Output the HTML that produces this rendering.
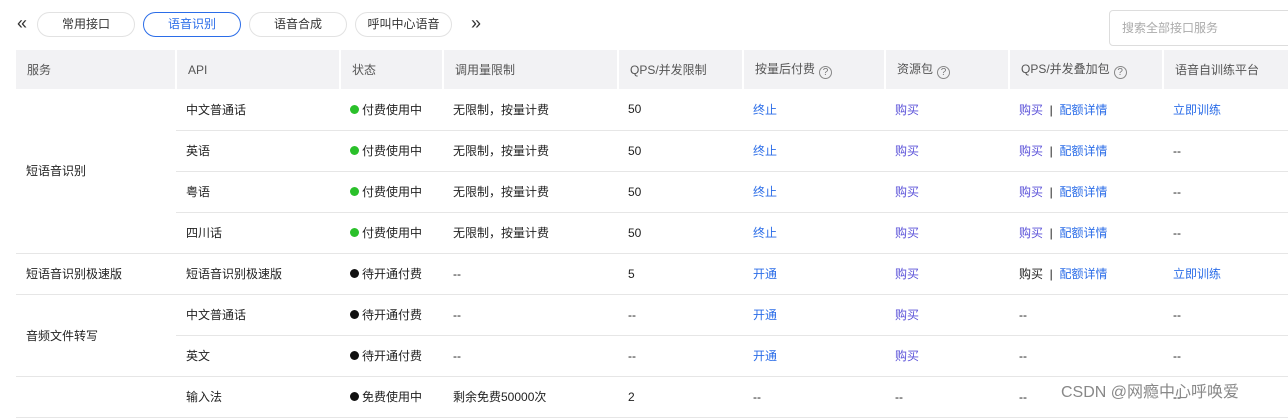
<!DOCTYPE html>
<html><head><meta charset="utf-8"><style>
*{margin:0;padding:0;box-sizing:border-box}
body{width:1288px;height:409px;overflow:hidden;background:#fff;font-family:"Liberation Sans","Noto Sans CJK SC",sans-serif;color:#222;font-size:12px;position:relative}
.arr{position:absolute;top:13px;font-size:18px;color:#333;line-height:20px}
.tab{position:absolute;top:12px;height:25px;border:1px solid #e2e2e2;border-radius:13px;text-align:center;line-height:23px;font-size:12px;color:#333;background:#fff}
.tab.on{border-color:#2b6de8;color:#2b6de8}
.search{position:absolute;left:1109px;top:10px;width:190px;height:36px;border:1px solid #ddd;border-radius:4px;color:#aaa;font-size:12px;line-height:34px;padding-left:12px}
table{position:absolute;left:16px;top:50px;border-collapse:collapse;table-layout:fixed;width:1290px}
th{background:#f2f2f4;height:39px;font-weight:normal;color:#555;text-align:left;padding-left:11px;font-size:12px;border-left:2px solid #fff}
th:first-child{border-left:none}
td{height:41px;border-bottom:1px solid #e6e6e6;padding-left:10px;white-space:nowrap}
.q{display:inline-block;width:13px;height:13px;border:1px solid #888;border-radius:50%;font-size:10px;line-height:11px;text-align:center;color:#777;margin-left:4px;vertical-align:-2px}
.g,.b{display:inline-block;width:9px;height:9px;border-radius:50%;margin-right:3px;vertical-align:0}
.g{background:#2ac02a}.b{background:#111}
.l{color:#2b6de8}.p{color:#5b52d9}
.wm{position:absolute;left:1061px;top:378px;font-size:16px;color:#888;white-space:nowrap}
</style></head><body>
<div class="arr" style="left:17px">«</div>
<div class="tab" style="left:37px;width:98px">常用接口</div>
<div class="tab on" style="left:143px;width:98px">语音识别</div>
<div class="tab" style="left:249px;width:98px">语音合成</div>
<div class="tab" style="left:355px;width:97px">呼叫中心语音</div>
<div class="arr" style="left:471px">»</div>
<div class="search">搜索全部接口服务</div>
<table>
<colgroup><col style="width:160px"><col style="width:164px"><col style="width:103px"><col style="width:175px"><col style="width:125px"><col style="width:142px"><col style="width:124px"><col style="width:154px"><col style="width:143px"></colgroup>
<tr><th>服务</th><th>API</th><th>状态</th><th>调用量限制</th><th>QPS/并发限制</th><th>按量后付费<span class="q">?</span></th><th>资源包<span class="q">?</span></th><th>QPS/并发叠加包<span class="q">?</span></th><th>语音自训练平台</th></tr>
<tr><td rowspan="4">短语音识别</td><td>中文普通话</td><td><span class="g"></span>付费使用中</td><td>无限制，按量计费</td><td>50</td><td class="l">终止</td><td class="p">购买</td><td><span class="p">购买</span> &nbsp;|&nbsp; <span class="l">配额详情</span></td><td class="l">立即训练</td></tr>
<tr><td>英语</td><td><span class="g"></span>付费使用中</td><td>无限制，按量计费</td><td>50</td><td class="l">终止</td><td class="p">购买</td><td><span class="p">购买</span> &nbsp;|&nbsp; <span class="l">配额详情</span></td><td>--</td></tr>
<tr><td>粤语</td><td><span class="g"></span>付费使用中</td><td>无限制，按量计费</td><td>50</td><td class="l">终止</td><td class="p">购买</td><td><span class="p">购买</span> &nbsp;|&nbsp; <span class="l">配额详情</span></td><td>--</td></tr>
<tr><td>四川话</td><td><span class="g"></span>付费使用中</td><td>无限制，按量计费</td><td>50</td><td class="l">终止</td><td class="p">购买</td><td><span class="p">购买</span> &nbsp;|&nbsp; <span class="l">配额详情</span></td><td>--</td></tr>
<tr><td>短语音识别极速版</td><td>短语音识别极速版</td><td><span class="b"></span>待开通付费</td><td>--</td><td>5</td><td class="l">开通</td><td class="p">购买</td><td>购买 &nbsp;|&nbsp; <span class="l">配额详情</span></td><td class="l">立即训练</td></tr>
<tr><td rowspan="2">音频文件转写</td><td>中文普通话</td><td><span class="b"></span>待开通付费</td><td>--</td><td>--</td><td class="l">开通</td><td class="p">购买</td><td>--</td><td>--</td></tr>
<tr><td>英文</td><td><span class="b"></span>待开通付费</td><td>--</td><td>--</td><td class="l">开通</td><td class="p">购买</td><td>--</td><td>--</td></tr>
<tr><td></td><td>输入法</td><td><span class="b"></span>免费使用中</td><td>剩余免费50000次</td><td>2</td><td>--</td><td>--</td><td>--</td><td>--</td></tr>
</table>
<div class="wm">CSDN @网瘾中心呼唤爱</div>
</body></html>
